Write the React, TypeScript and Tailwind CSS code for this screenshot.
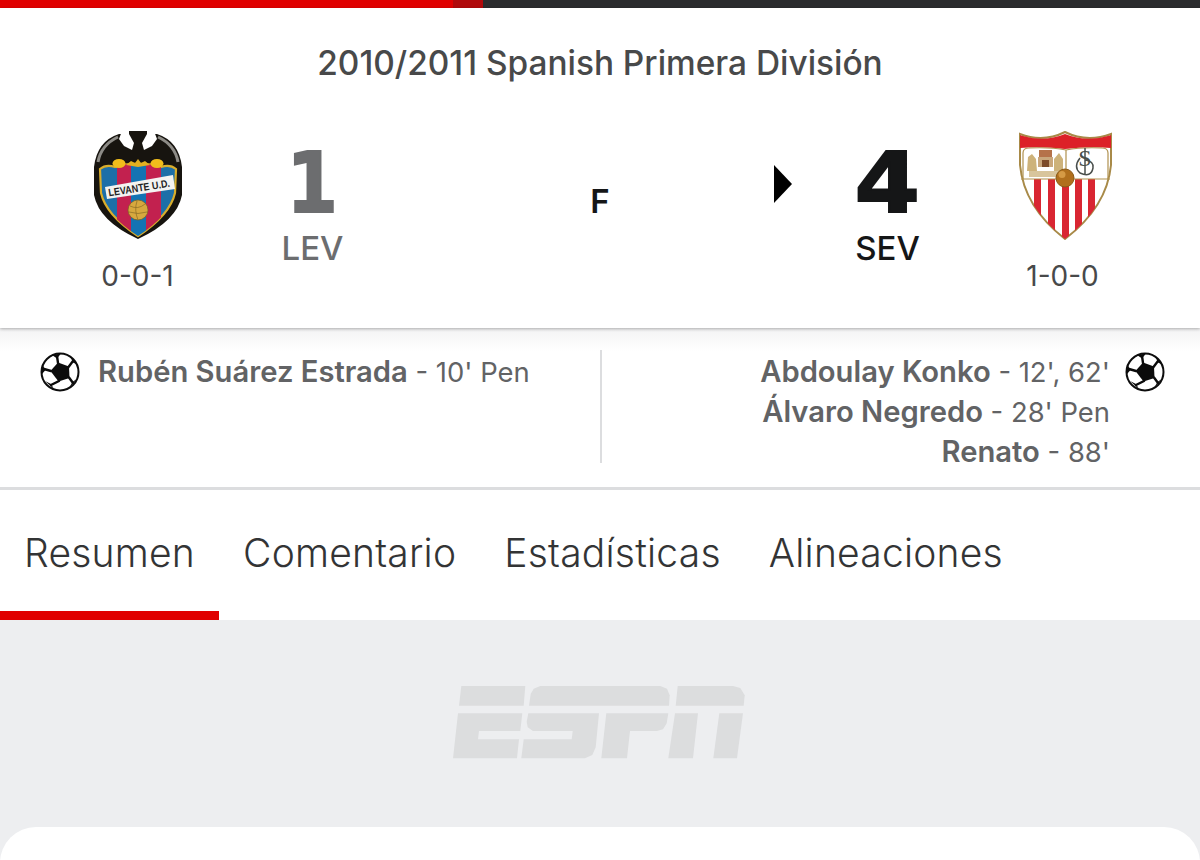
import React from "react";

const FONT = "font-['Inter','Liberation_Sans',sans-serif]";

function Ball() {
  return (
    <svg width="40" height="40" viewBox="0 0 40 40" className="shrink-0">
      <circle cx="20" cy="20" r="18.5" fill="#fff" stroke="#0d0d0d" strokeWidth="2" />
      <polygon points="18,10.5 29,14.5 29.5,26 18.5,29.5 10.5,19" fill="#0b0b0b" />
      <g stroke="#0b0b0b" strokeWidth="2.4" strokeLinecap="round">
        <path d="M18 11 L17 4 M28.5 15 L33 9 M29 25.5 L33 31 M19 29 L11 33 M11 19 L4 17" />
      </g>
      <g fill="#0b0b0b">
        <polygon points="12,3 17,6.5 21,1.5" />
        <polygon points="30,4 33,10.5 38,13" />
        <polygon points="38,26 32.5,30 29,36" />
        <polygon points="14,37 11,32 5,29" />
        <polygon points="2,12 5.5,18 2,22" />
      </g>
    </svg>
  );
}

function LevanteCrest() {
  const shield = "M7 38 Q13 33 22 36 Q34 32 45 33 Q56 32 68 36 Q77 33 83 38 L82 62 Q77 84 45 105 Q13 84 8 62Z";
  return (
    <svg width="90" height="108" viewBox="0 0 90 108">
      <defs>
        <clipPath id="lev-shield"><path d={shield} /></clipPath>
      </defs>
      <path d="M36 0 L54 0 L54 3 L64 3 Q86 10 89 36 L89 64 Q84 90 45 108 Q6 90 1 64 L1 36 Q4 10 26 3 L36 3Z" fill="#17140f" />
      <polygon points="29,0 36,3 41,12 39,19 31,15 26,8" fill="#fff" />
      <polygon points="61,0 54,3 49,12 51,19 59,15 64,8" fill="#fff" />
      <path d="M5 31 Q8 14 25 6" stroke="#8d8b86" strokeWidth="3" fill="none" />
      <path d="M85 31 Q82 14 65 6" stroke="#8d8b86" strokeWidth="3" fill="none" />
      <path d={shield} fill="#1d6fa8" stroke="#d9ad2b" strokeWidth="2.2" />
      <g clipPath="url(#lev-shield)">
        <rect x="24" y="30" width="14" height="80" fill="#c2214f" />
        <rect x="53" y="30" width="15" height="80" fill="#c2214f" />
        <rect x="38" y="30" width="15" height="80" fill="#1473b3" />
      </g>
      <path d="M33 34 L38 30 L42 32 L45 28 L48 32 L52 30 L57 34 L45 36Z" fill="#e3b021" />
      <ellipse cx="26" cy="32.5" rx="6.5" ry="4.5" fill="#f1bd1c" />
      <ellipse cx="64" cy="32.5" rx="6.5" ry="4.5" fill="#f1bd1c" />
      <polygon points="12,56 80,44 82,58 14,68" fill="#f4f3f1" />
      <text x="46" y="60.5" textAnchor="middle" transform="rotate(-9 46 56)" fontSize="10.5" fontWeight="700" fill="#242424" fontFamily="'Liberation Sans Narrow','Liberation Sans',sans-serif" textLength="62" lengthAdjust="spacingAndGlyphs">LEVANTE U.D.</text>
      <circle cx="45" cy="79" r="10" fill="#d7a83e" stroke="#7c6220" strokeWidth="0.7" />
      <path d="M37 75 Q45 79 52 73 M36 81 Q45 84 54 81 M44 70 Q41 79 45 89" stroke="#8a6c24" strokeWidth="0.7" fill="none" />
    </svg>
  );
}

function SevillaCrest() {
  const shield = "M1 3 Q24 12 46 1 Q68 12 92 3 L92 34 Q88 76 46 108 Q5 76 1 34Z";
  return (
    <svg width="93" height="109" viewBox="0 0 93 109" className="ml-[6px]">
      <defs>
        <clipPath id="sev-shield"><path d={shield} /></clipPath>
      </defs>
      <path d={shield} fill="#fff" stroke="#a88a48" strokeWidth="2" />
      <g clipPath="url(#sev-shield)">
        <path d="M0 4 Q24 12 46 3 Q68 12 93 4 V17 Q70 15 46 18 Q22 15 0 17Z" fill="#dc2128" />
        <rect x="15" y="48" width="7" height="50" fill="#d92632" />
        <rect x="29" y="48" width="7" height="62" fill="#d92632" />
        <rect x="43" y="48" width="7" height="62" fill="#d92632" />
        <rect x="56" y="48" width="7" height="62" fill="#d92632" />
        <rect x="69" y="48" width="7" height="50" fill="#d92632" />
      </g>
      <path d="M4 48 V22 Q4 17 10 17 Q32 16 47 19 Q62 16 83 17 Q89 17 89 22 V48 M2 48 H91 M47 19 V40" stroke="#b0914f" strokeWidth="1.2" fill="none" />
      <path d="M9 26 L13 23 L17 28 L18 40 L8 40Z M35 28 L40 22 L44 28 L44 40 L35 40Z" fill="#cdb27a" />
      <rect x="20" y="19" width="13" height="7" fill="#b5724a" />
      <rect x="19" y="26" width="15" height="10" fill="#c9a77c" />
      <rect x="23" y="29" width="7" height="7" fill="#7d4b2a" />
      <rect x="10" y="40" width="34" height="6" fill="#d8c59c" />
      <text x="66" y="35" textAnchor="middle" fontSize="24" fill="#4a4f4c" fontFamily="'Liberation Serif',serif">S</text>
      <path d="M66 17 V44 M61 27 Q54 36 61 42 Q72 47 74 37 Q75 30 66 29" stroke="#4a4f4c" strokeWidth="1.5" fill="none" />
      <circle cx="46" cy="47" r="9" fill="#b06f1d" stroke="#8a5a17" strokeWidth="1" />
      <circle cx="43" cy="43.5" r="3.5" fill="#d59a45" />
    </svg>
  );
}

function EspnLogo() {
  const p = (pts: [number, number][]) =>
    pts.map(([x, y]) => `${((x - 70) / 3).toFixed(1)},${((y - 45) / 3).toFixed(1)}`).join(" ");
  return (
    <svg width="292" height="74" viewBox="0 0 292 74" fill="#dcddde" className="mr-[2px]">
      <polygon points={p([[95, 48], [287, 48], [282, 107], [88, 107]])} />
      <polygon points={p([[85, 130], [278, 130], [272, 183], [148, 183], [145, 208], [268, 208], [262, 265], [70, 265]])} />
      <polygon points={p([[298, 107], [303, 72], [312, 56], [332, 48], [692, 48], [712, 56], [720, 76], [718, 107]])} />
      <polygon points={p([[296, 130], [508, 130], [498, 232], [488, 255], [466, 265], [275, 265], [282, 208], [426, 208], [429, 183], [310, 183], [294, 172], [291, 155]])} />
      <polygon points={p([[530, 130], [716, 130], [711, 160], [700, 178], [682, 183], [601, 183], [592, 265], [515, 265]])} />
      <polygon points={p([[738, 107], [744, 48], [910, 48], [932, 54], [945, 76], [942, 107]])} />
      <polygon points={p([[736, 130], [805, 130], [790, 265], [716, 265]])} />
      <polygon points={p([[869, 130], [940, 130], [922, 265], [851, 265]])} />
    </svg>
  );
}

function Scorer({ name, detail }: { name: string; detail: string }) {
  return (
    <div className="h-10 leading-10 whitespace-nowrap">
      <span className="font-semibold text-[29.2px] text-[#626365]">{name}</span>
      <span className="text-[27.4px] text-[#626365]"> - {detail}</span>
    </div>
  );
}

export default function App() {
  const tabs = ["Resumen", "Comentario", "Estadísticas", "Alineaciones"];

  return (
    <div className={`${FONT} w-[1200px] h-[860px] overflow-hidden bg-[#edeef0] flex flex-col`}>
      <div className="h-2 flex shrink-0 bg-[#2b2c2e]">
        <div className="w-[453px] bg-[#e00000]" />
        <div className="w-[30px] bg-[#b00a0c]" />
      </div>

      <header className="relative z-10 h-[320px] bg-white shadow-[0_1px_3px_rgba(0,0,0,0.3)] shrink-0">
        <h1 className="pt-[35px] text-center text-[33.4px] leading-10 font-medium text-[#48494a]">
          2010/2011 Spanish Primera División
        </h1>
        <div className="grid grid-cols-[275px_75px_1fr_75px_275px] mt-[48px]">
          <div className="flex flex-col items-center">
            <LevanteCrest />
            <div className="mt-[19px] text-[28px] leading-9 text-[#48494a]">0-0-1</div>
          </div>
          <div className="flex flex-col items-center pt-[13px]">
            <div className="h-[78px] text-[84px] leading-[78px] font-bold font-['DejaVu_Sans',sans-serif] text-[#6c6d6f] scale-x-[0.88] [-webkit-text-stroke:2px_#6c6d6f]">1</div>
            <div className="mt-[6px] text-[33px] leading-10 font-medium text-[#6c6d6f]">LEV</div>
          </div>
          <div className="grid grid-cols-[1fr_auto_1fr]">
            <div />
            <div className="pt-[50px] text-[33px] leading-10 font-semibold text-[#151617]">F</div>
            <div className="flex justify-end pr-[58px] pt-[34px]">
              <div className="w-0 h-0 border-y-[19px] border-y-transparent border-l-[18px] border-l-black" />
            </div>
          </div>
          <div className="flex flex-col items-center pt-[13px]">
            <div className="h-[78px] text-[84px] leading-[78px] font-bold font-['DejaVu_Sans',sans-serif] text-[#151617] scale-x-[1.12] [-webkit-text-stroke:2px_#151617]">4</div>
            <div className="mt-[6px] text-[33px] leading-10 font-medium text-[#151617]">SEV</div>
          </div>
          <div className="flex flex-col items-center">
            <SevillaCrest />
            <div className="mt-[18px] text-[28px] leading-9 text-[#48494a]">1-0-0</div>
          </div>
        </div>
      </header>

      <section className="h-[162px] shrink-0 border-b-[3px] border-[#dcdddf] bg-white bg-gradient-to-b from-[#f3f3f4] to-white to-[15%] grid grid-cols-2 pt-[22px]">
        <div className="flex items-start gap-[18px] pl-[40px] pt-[2px] h-[113px]">
          <Ball />
          <div>
            <Scorer name="Rubén Suárez Estrada" detail="10' Pen" />
          </div>
        </div>
        <div className="flex items-start justify-end gap-[15px] pr-[35px] pt-[2px] h-[113px] border-l-2 border-[#dcdddf]">
          <div className="text-right">
            <Scorer name="Abdoulay Konko" detail="12', 62'" />
            <Scorer name="Álvaro Negredo" detail="28' Pen" />
            <Scorer name="Renato" detail="88'" />
          </div>
          <Ball />
        </div>
      </section>

      <nav className="h-[130px] shrink-0 bg-white flex">
        {tabs.map((tab, i) => (
          <div
            key={tab}
            className={`px-6 pt-[39px] text-[39px] leading-[48px] tracking-[0.22px] font-[350] text-[#333435] border-b-[9px] ${
              i === 0 ? "border-[#e00000]" : "border-transparent"
            }`}
          >
            {tab}
          </div>
        ))}
      </nav>

      <main className="flex-1 flex flex-col items-center pt-[65px]">
        <EspnLogo />
        <div className="mt-[68px] w-full h-[60px] shrink-0 bg-white rounded-t-[36px]" />
      </main>
    </div>
  );
}
